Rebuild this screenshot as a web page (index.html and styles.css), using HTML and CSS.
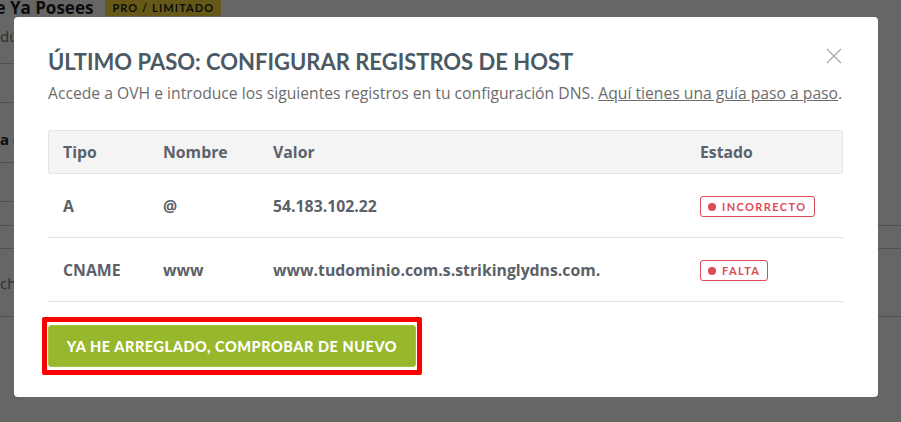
FILE: index.html
```html
<!DOCTYPE html>
<html lang="es">
<head>
    <meta charset="UTF-8">
    <meta name="viewport" content="width=device-width, initial-scale=1.0">
    <title>Configurar registros de host</title>
    <link rel="stylesheet" href="styles.css">
</head>
<body>
    <!-- Página de fondo (queda detrás del overlay) -->
    <div class="pagina">
        <div class="fila fila-cabecera">
            <div class="pagina-titulo">
                <span class="pagina-h">Dominios Que Ya Posees</span>
                <span class="pagina-badge">PRO / LIMITADO</span>
            </div>
            <div class="pagina-sub">dú</div>
        </div>
        <div class="fila fila-38 izquierda"></div>
        <div class="fila fila-59 izquierda pagina-bold">a c</div>
        <div class="fila fila-38 izquierda"></div>
        <div class="fila fila-23"></div>
        <div class="fila fila-22"></div>
        <div class="fila fila-67 pagina-sub">cht</div>
    </div>

    <div class="overlay">
        <div class="modal">
            <button class="cerrar" aria-label="Cerrar">
                <svg width="16" height="16" viewBox="0 0 16 16">
                    <path d="M1 1 L15 15 M15 1 L1 15" stroke="#a9a9a9" stroke-width="1.3" fill="none"/>
                </svg>
            </button>

            <h1 class="modal-titulo">Último paso: configurar registros de host</h1>
            <p class="modal-texto">Accede a OVH e introduce los siguientes registros en tu configuración DNS. <a href="#">Aquí tienes una guía paso a paso</a>.</p>

            <table class="registros">
                <thead>
                    <tr>
                        <th class="col-tipo">Tipo</th>
                        <th class="col-nombre">Nombre</th>
                        <th class="col-valor">Valor</th>
                        <th>Estado</th>
                    </tr>
                </thead>
                <tbody>
                    <tr>
                        <td>A</td>
                        <td>@</td>
                        <td>54.183.102.22</td>
                        <td><span class="estado"><i class="punto"></i>INCORRECTO</span></td>
                    </tr>
                    <tr>
                        <td>CNAME</td>
                        <td>www</td>
                        <td>www.tudominio.com.s.strikinglydns.com.</td>
                        <td><span class="estado"><i class="punto"></i>FALTA</span></td>
                    </tr>
                </tbody>
            </table>

            <div class="resaltado">
                <button class="btn-verde">Ya he arreglado, comprobar de nuevo</button>
            </div>
        </div>
    </div>
</body>
</html>
```

FILE: styles.css
```css
body {
    margin: 0;
    width: 901px;
    height: 422px;
    overflow: hidden;
    position: relative;
    font-family: "Open Sans", sans-serif;
    background: #fff;
}

/* pagina de fondo */
.pagina {
    color: #333;
}
.fila {
    border-bottom: 1px solid #c8c8c8;
    font-size: 15px;
    color: #555;
    display: flex;
    align-items: center;
}
.izquierda {
    margin-right: 60px;
}
.fila-cabecera {
    height: 63px;
    flex-direction: column;
    align-items: flex-start;
    margin-right: 60px;
}
.pagina-titulo {
    display: flex;
    align-items: center;
    gap: 12px;
    height: 20px;
    margin-top: -3px;
    margin-left: -114px;
}
.pagina-h {
    font-weight: 700;
    font-size: 17px;
    color: #222;
}
.pagina-badge {
    font-family: Lato, sans-serif;
    font-weight: 700;
    font-size: 11px;
    letter-spacing: 1.1px;
    background: #ffdf3c;
    color: #222;
    padding: 2px 7px;
    border-radius: 3px;
}
.pagina-sub {
    margin-top: 9px;
    font-size: 15px;
    color: #777;
}
.fila-38 { height: 38px; }
.fila-59 {
    padding-top: 12px;
    box-sizing: border-box;
    height: 60px;
}
.fila-23 { height: 23px; }
.fila-22 { height: 22px; }
.fila-67 {
    height: 67px;
    margin-top: 0;
}
.pagina-bold {
    font-weight: 700;
    color: #222;
}

/* overlay + modal */
.overlay {
    position: absolute;
    top: 0;
    left: 0;
    right: 0;
    bottom: 0;
    background: rgba(0, 0, 0, 0.6);
}
.modal {
    position: absolute;
    top: 17px;
    left: 14px;
    width: 864px;
    height: 380px;
    box-sizing: border-box;
    background: #fff;
    border-radius: 4px;
    padding: 30px 35px 0 34px;
}
.cerrar {
    position: absolute;
    top: 31px;
    right: 36px;
    padding: 0;
    border: none;
    background: none;
    width: 16px;
    height: 16px;
    cursor: pointer;
}
.cerrar svg {
    display: block;
}
.modal-titulo {
    margin: 0;
    font-family: Lato, sans-serif;
    font-weight: 700;
    font-size: 22px;
    line-height: 30px;
    text-transform: uppercase;
    color: #4b5964;
}
.modal-texto {
    margin: 5px 0 0;
    font-size: 15.7px;
    line-height: 23px;
    color: #6c6c6c;
    white-space: nowrap;
}
.modal-texto a {
    color: #6c6c6c;
    text-decoration: underline;
}

.registros {
    margin-top: 25px;
    width: 795px;
    border-collapse: separate;
    border-spacing: 0;
    color: #5b6168;
    font-size: 15.8px;
}
.registros th {
    text-align: left;
    font-weight: 700;
    height: 42px;
    padding: 0 0 0 14px;
    background: #f4f4f4;
    border-top: 1px solid #e5e5e5;
    border-bottom: 1px solid #e5e5e5;
    color: #5a626d;
}
.registros th:first-child {
    border-left: 1px solid #e5e5e5;
    border-radius: 3px 0 0 3px;
}
.registros th:last-child {
    border-right: 1px solid #e5e5e5;
    border-radius: 0 3px 3px 0;
}
.col-tipo { width: 86px; }
.col-nombre { width: 96px; }
.col-valor { width: 413px; }
.registros td {
    height: 63px;
    padding: 0 0 0 14px;
    font-weight: 700;
    border-bottom: 1px solid #e3e3e3;
}
.registros td:first-child {
    padding-left: 15px;
}
.estado {
    display: inline-flex;
    align-items: center;
    gap: 6px;
    height: 19px;
    padding: 0 7px 0 7px;
    border: 1px solid #dc4a55;
    border-radius: 3px;
    font-family: Lato, sans-serif;
    font-weight: 700;
    font-size: 11px;
    letter-spacing: 1.4px;
    color: #dc4a55;
}
.punto {
    width: 8px;
    height: 8px;
    border-radius: 50%;
    background: #dc4a55;
}

/* marco rojo de la captura */
.resaltado {
    display: inline-block;
    margin-top: 15px;
    margin-left: -6px;
    padding: 3px 1px;
    border: 5px solid #ff0000;
    border-radius: 2px;
}
.btn-verde {
    display: block;
    width: 368px;
    height: 42px;
    background: #97b82c;
    border: 1px solid #a3c23e;
    border-radius: 3px;
    color: #fff;
    font-family: Lato, sans-serif;
    font-weight: 900;
    font-size: 14.5px;
    letter-spacing: 0.55px;
    text-transform: uppercase;
    cursor: pointer;
}
```
